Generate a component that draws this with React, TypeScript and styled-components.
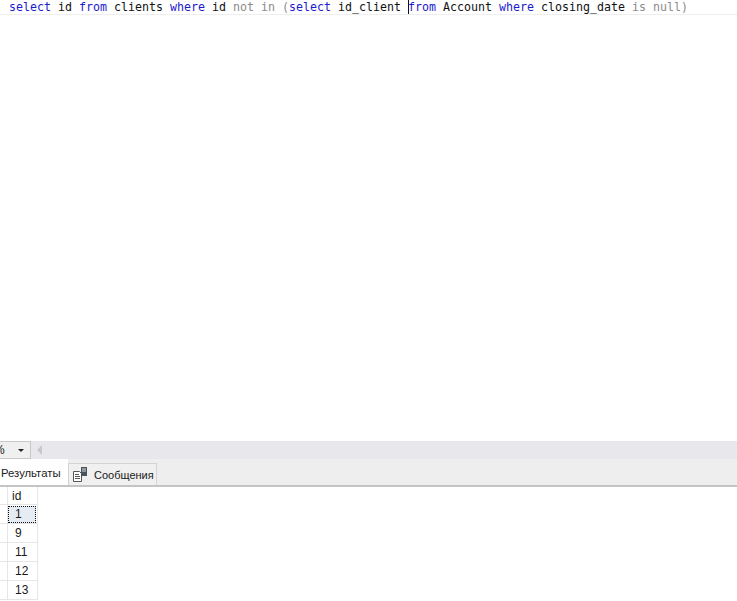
import React from 'react';
import styled, {createGlobalStyle} from 'styled-components';

const GlobalStyle = createGlobalStyle`
  html, body {
    margin: 0;
    padding: 0;
    background: #fff;
    overflow: hidden;
  }
`;

const rows = ['1', '9', '11', '12', '13'];

const MessagesIcon: React.FC = () => (
  <svg width="15" height="15" viewBox="0 0 15 15">
    <path d="M0.5 4.5h6l2 2v8h-8z" fill="#fff" stroke="#555" />
    <path d="M2 7.5h4M2 9.5h5M2 11.5h5" stroke="#555" />
    <rect x="8" y="0" width="6" height="9" fill="#4a525e" />
    <path d="M9 2h4M9 4h4" stroke="#d8dce0" />
  </svg>
);

export default function App() {
  return (
    <Page>
      <GlobalStyle />
      <Editor>
        <CodeLine>
          <Keyword>select</Keyword> id <Keyword>from</Keyword> clients <Keyword>where</Keyword> id{' '}
          <Muted>not in (</Muted>
          <Keyword>select</Keyword> id_client <Caret />
          <Keyword>from</Keyword> Account <Keyword>where</Keyword> closing_date <Muted>is null)</Muted>
        </CodeLine>
      </Editor>
      <ScrollRow>
        <ZoomBox>
          <ZoomText>%</ZoomText>
          <ZoomArrow />
        </ZoomBox>
        <ScrollLeft />
      </ScrollRow>
      <TabBar>
        <ActiveTab>Результаты</ActiveTab>
        <Tab>
          <MessagesIcon />
          Сообщения
        </Tab>
      </TabBar>
      <Grid>
        <HeaderRow>
          <Gutter />
          <IdCell>id</IdCell>
        </HeaderRow>
        {rows.map((value, index) => (
          <DataRow key={value}>
            <Gutter />
            <IdCell>
              <CellValue $selected={index === 0}>{value}</CellValue>
            </IdCell>
          </DataRow>
        ))}
      </Grid>
    </Page>
  );
}

const Page = styled.div`
  display: flex;
  flex-direction: column;
  width: 737px;
  height: 601px;
  overflow: hidden;
  background: #fff;
  font-family: 'Liberation Sans', Arial, sans-serif;
`;

const Editor = styled.div`
  height: 441px;
  flex: none;
`;

const CodeLine = styled.div`
  height: 14px;
  padding-left: 9px;
  border-bottom: 1px solid #eeeeee;
  font-family: 'DejaVu Sans Mono', monospace;
  font-size: 11.63px;
  line-height: 14px;
  color: #111;
  white-space: pre;
`;

const Keyword = styled.span`
  color: #1a1ad0;
`;

const Muted = styled.span`
  color: #8c8c8c;
`;

const Caret = styled.span`
  display: inline-block;
  width: 1px;
  height: 14px;
  margin-right: -1px;
  background: #111;
  vertical-align: top;
`;

const ScrollRow = styled.div`
  display: flex;
  align-items: center;
  height: 18px;
  flex: none;
  background: #e8e8ec;
`;

const ZoomBox = styled.div`
  display: flex;
  align-items: center;
  justify-content: space-between;
  box-sizing: border-box;
  width: 31px;
  height: 18px;
  padding-right: 6px;
  background: #f0f0f0;
  border: 1px solid #c8c8c8;
  border-left: none;
`;

const ZoomText = styled.span`
  margin-left: -6px;
  font-size: 12px;
  color: #222;
`;

const ZoomArrow = styled.span`
  width: 0;
  height: 0;
  border-left: 3px solid transparent;
  border-right: 3px solid transparent;
  border-top: 3px solid #222;
`;

const ScrollLeft = styled.span`
  width: 0;
  height: 0;
  margin-left: 6px;
  border-top: 5px solid transparent;
  border-bottom: 5px solid transparent;
  border-right: 5px solid #c8c8cc;
`;

const TabBar = styled.div`
  display: flex;
  align-items: flex-end;
  box-sizing: border-box;
  height: 28px;
  flex: none;
  background: #eeeeee;
  border-bottom: 2px solid #c4c4c4;
`;

const ActiveTab = styled.div`
  display: flex;
  align-items: center;
  box-sizing: border-box;
  width: 68px;
  height: 26px;
  padding: 2px 0 0 1px;
  background: #fff;
  font-size: 11.3px;
  color: #1a1a1a;
`;

const Tab = styled.div`
  display: flex;
  align-items: center;
  gap: 6px;
  box-sizing: border-box;
  width: 89px;
  height: 22px;
  padding-left: 4px;
  background: #f0f0f0;
  border: 1px solid #d4d4d4;
  border-bottom: none;
  font-size: 11px;
  color: #1a1a1a;
`;

const Grid = styled.div`
  display: flex;
  flex-direction: column;
  font-size: 12px;
  color: #1a1a1a;
`;

const HeaderRow = styled.div`
  display: flex;
  box-sizing: border-box;
  width: 38px;
  height: 18px;
  border-bottom: 1px solid #e6e6e6;
`;

const DataRow = styled(HeaderRow)`
  height: 19px;
`;

const Gutter = styled.div`
  width: 7px;
  flex: none;
  border-right: 1px solid #e6e6e6;
`;

const IdCell = styled.div`
  display: flex;
  align-items: center;
  flex: 1;
  padding-left: 4px;
  border-right: 1px solid #e6e6e6;
`;

const CellValue = styled.div<{$selected: boolean}>`
  box-sizing: border-box;
  flex: none;
  width: 28px;
  height: 17px;
  margin-top: 1px;
  margin-left: -4px;
  padding-left: 7px;
  line-height: 17px;
  background: ${(props) => (props.$selected ? '#e6ecf3' : 'transparent')};
  outline: ${(props) => (props.$selected ? '1px dotted #111' : 'none')};
  outline-offset: -1px;
`;
